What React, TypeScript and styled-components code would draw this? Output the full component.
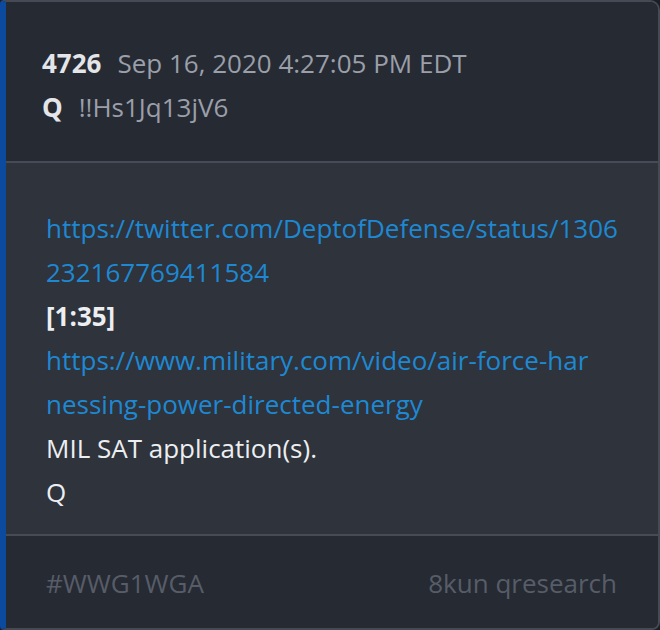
import React from "react";
import styled, { createGlobalStyle } from "styled-components";

const Global = createGlobalStyle`
  html, body { margin: 0; padding: 0; background: #1b1e24; }
  body { font-family: "Open Sans", "Noto Sans", sans-serif; }
`;

const Card = styled.div`
  box-sizing: border-box;
  width: 660px;
  height: 630px;
  display: flex;
  flex-direction: column;
  border: 2px solid #454a54;
  border-left: 6px solid #0b4a9e;
  border-top-right-radius: 10px;
  border-bottom-right-radius: 8px;
  border-top-left-radius: 4px;
  border-bottom-left-radius: 4px;
  overflow: hidden;
  background: #262a33;
`;

const Header = styled.div`
  padding: 39px 30px 32px 36px;
  background: #262a33;
  border-bottom: 2px solid #464b55;
  font-size: 26px;
  line-height: 44px;
`;

const Row = styled.div`
  display: flex;
  align-items: baseline;
  gap: 16px;
`;

const Strong = styled.span`
  font-weight: 700;
  color: #e4e5e8;
`;

const Muted = styled.span`
  color: #9a9fa9;
`;

const Body = styled.div`
  flex: 1;
  background: #2e333c;
  padding: 43px 38px 20px 40px;
  font-size: 26px;
  line-height: 44px;
  color: #eceef1;
  word-break: break-all;
`;

const Link = styled.a`
  display: block;
  color: #1e88d2;
  text-decoration: none;
`;

const Line = styled.div<{ $bold?: boolean }>`
  font-weight: ${(p) => (p.$bold ? 700 : 400)};
`;

const Footer = styled.div`
  height: 92px;
  border-top: 2px solid #464b55;
  background: #262a33;
  display: flex;
  align-items: center;
  justify-content: space-between;
  padding: 2px 41px 0 40px;
  font-size: 26px;
  color: #575d68;
`;

export default function App() {
  return (
    <>
      <Global />
      <Card>
        <Header>
          <Row>
            <Strong>4726</Strong>
            <Muted>Sep 16, 2020 4:27:05 PM EDT</Muted>
          </Row>
          <Row>
            <Strong>Q</Strong>
            <Muted>!!Hs1Jq13jV6</Muted>
          </Row>
        </Header>
        <Body>
          <Link href="#">https://twitter.com/DeptofDefense/status/1306232167769411584</Link>
          <Line $bold>[1:35]</Line>
          <Link href="#">
            https://www.military.com/video/air-force-har
            <br />
            nessing-power-directed-energy
          </Link>
          <Line>MIL SAT application(s).</Line>
          <Line>Q</Line>
        </Body>
        <Footer>
          <span>#WWG1WGA</span>
          <span>8kun qresearch</span>
        </Footer>
      </Card>
    </>
  );
}
